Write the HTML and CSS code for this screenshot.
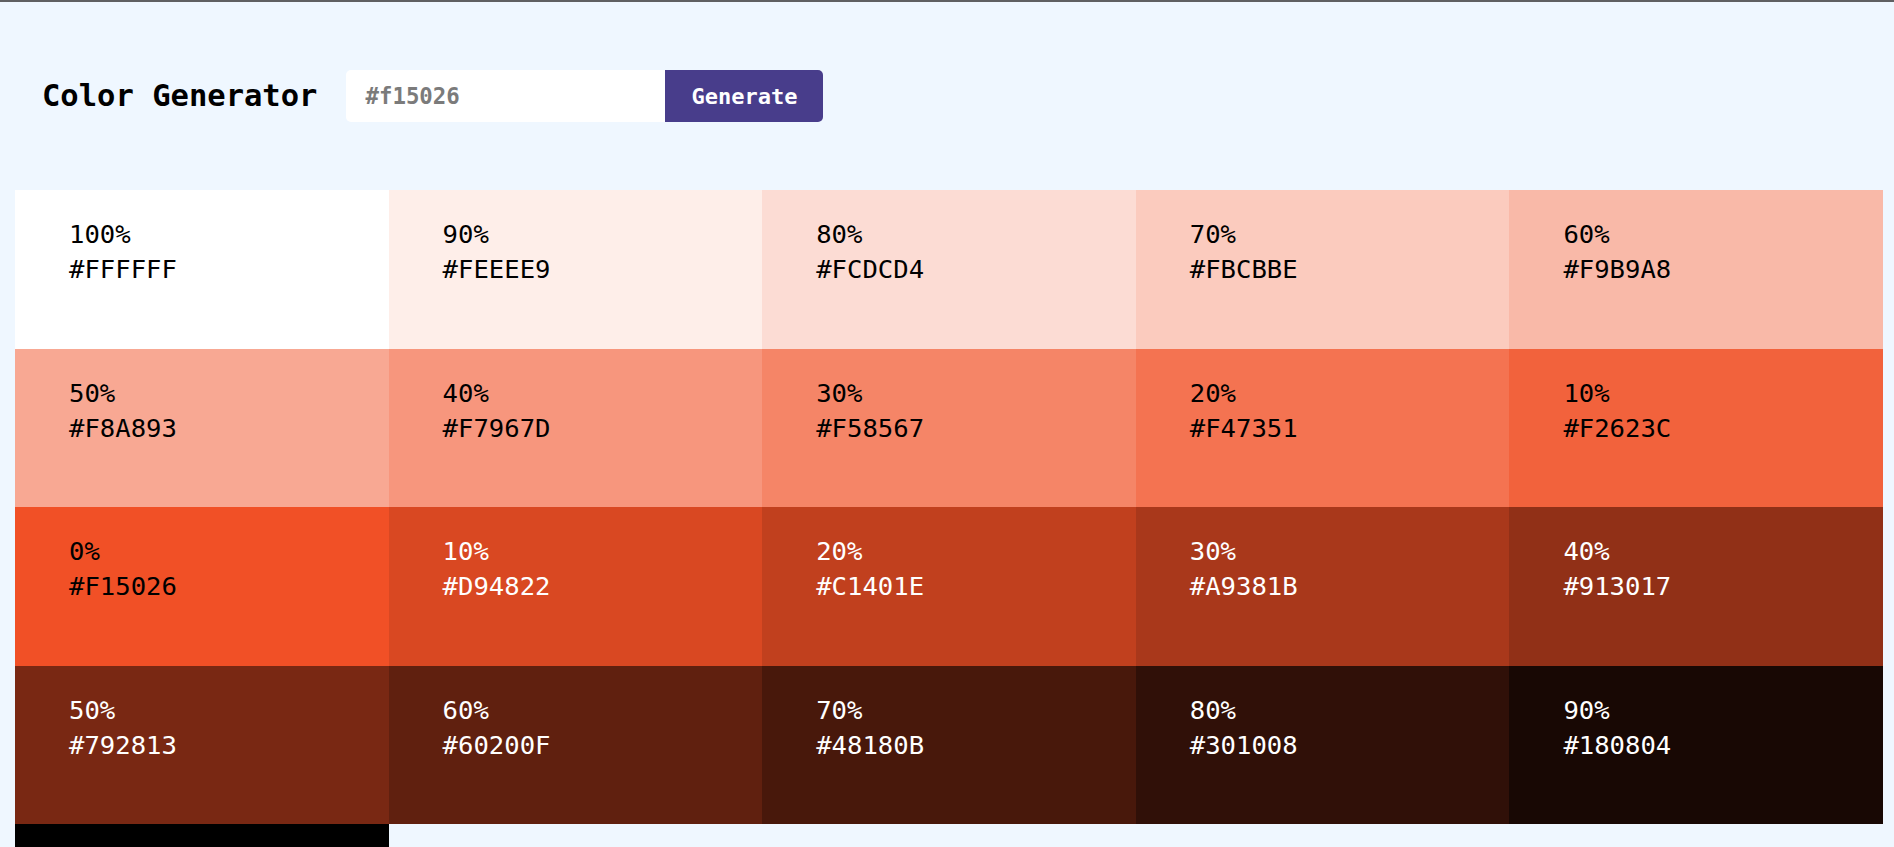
FILE: index.html
```html
<!DOCTYPE html>
<html lang="en">
<head>
<meta charset="utf-8">
<title>Color Generator</title>
<link rel="stylesheet" href="styles.css">
</head>
<body>
<header class="header">
  <h3 class="title">Color Generator</h3>
  <form class="picker">
    <input class="picker-input" type="text" placeholder="#f15026">
    <button class="picker-btn" type="button">Generate</button>
  </form>
</header>
<section class="colors">
  <article class="tile" style="background:#FFFFFF"><p class="pct">100%</p><p class="hex">#FFFFFF</p></article>
  <article class="tile" style="background:#FEEEE9"><p class="pct">90%</p><p class="hex">#FEEEE9</p></article>
  <article class="tile" style="background:#FCDCD4"><p class="pct">80%</p><p class="hex">#FCDCD4</p></article>
  <article class="tile" style="background:#FBCBBE"><p class="pct">70%</p><p class="hex">#FBCBBE</p></article>
  <article class="tile" style="background:#F9B9A8"><p class="pct">60%</p><p class="hex">#F9B9A8</p></article>
  <article class="tile" style="background:#F8A893"><p class="pct">50%</p><p class="hex">#F8A893</p></article>
  <article class="tile" style="background:#F7967D"><p class="pct">40%</p><p class="hex">#F7967D</p></article>
  <article class="tile" style="background:#F58567"><p class="pct">30%</p><p class="hex">#F58567</p></article>
  <article class="tile" style="background:#F47351"><p class="pct">20%</p><p class="hex">#F47351</p></article>
  <article class="tile" style="background:#F2623C"><p class="pct">10%</p><p class="hex">#F2623C</p></article>
  <article class="tile" style="background:#F15026"><p class="pct">0%</p><p class="hex">#F15026</p></article>
  <article class="tile tile-dark" style="background:#D94822"><p class="pct">10%</p><p class="hex">#D94822</p></article>
  <article class="tile tile-dark" style="background:#C1401E"><p class="pct">20%</p><p class="hex">#C1401E</p></article>
  <article class="tile tile-dark" style="background:#A9381B"><p class="pct">30%</p><p class="hex">#A9381B</p></article>
  <article class="tile tile-dark" style="background:#913017"><p class="pct">40%</p><p class="hex">#913017</p></article>
  <article class="tile tile-dark" style="background:#792813"><p class="pct">50%</p><p class="hex">#792813</p></article>
  <article class="tile tile-dark" style="background:#60200F"><p class="pct">60%</p><p class="hex">#60200F</p></article>
  <article class="tile tile-dark" style="background:#48180B"><p class="pct">70%</p><p class="hex">#48180B</p></article>
  <article class="tile tile-dark" style="background:#301008"><p class="pct">80%</p><p class="hex">#301008</p></article>
  <article class="tile tile-dark" style="background:#180804"><p class="pct">90%</p><p class="hex">#180804</p></article>
  <article class="tile tile-dark" style="background:#000000"><p class="pct">100%</p><p class="hex">#000000</p></article>
</section>
</body>
</html>
```
FILE: styles.css
```css
html {
  border-top: 2px solid #5f6062;
}
body {
  margin: 0;
  background: #eff7ff;
  font-family: "DejaVu Sans Mono", "Liberation Mono", monospace;
  color: #000;
}
.header {
  display: flex;
  align-items: center;
  height: 52px;
  padding: 68px 0 68px 42px;
}
.title {
  margin: 0 29px 0 0;
  font-size: 30.5px;
  font-weight: 700;
  line-height: 1;
}
.picker {
  display: flex;
  height: 52px;
}
.picker-input {
  box-sizing: border-box;
  width: 319px;
  height: 52px;
  border: none;
  border-radius: 5px 0 0 5px;
  padding: 0 0 0 19px;
  background: #fff;
  font-family: inherit;
  font-size: 22.4px;
  font-weight: 700;
  color: #333;
  outline: none;
}
.picker-input::placeholder {
  color: #7b7b7b;
}
.picker-btn {
  width: 158px;
  height: 52px;
  border: none;
  border-radius: 0 5px 5px 0;
  background: #483d8b;
  color: #fff;
  font-family: inherit;
  font-size: 22px;
  font-weight: 700;
  padding: 0;
}
.colors {
  display: grid;
  grid-template-columns: repeat(5, 1fr);
  grid-auto-rows: 158.5px;
  margin: 0 11px 0 15px;
}
.tile {
  box-sizing: border-box;
  padding: 27px 0 0 54px;
  font-size: 25.6px;
  line-height: 35px;
  color: #000;
}
.tile-dark {
  color: #fff;
}
.pct, .hex {
  margin: 0;
}
```
